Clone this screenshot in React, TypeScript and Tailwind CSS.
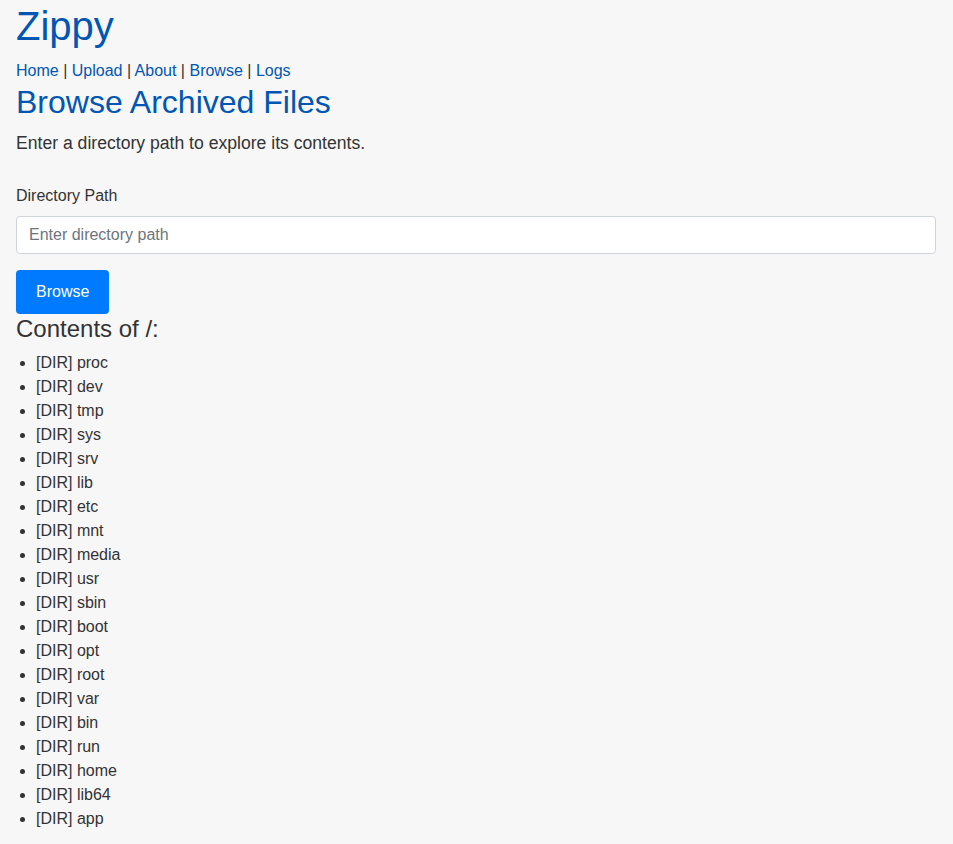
const entries = [
  "proc",
  "dev",
  "tmp",
  "sys",
  "srv",
  "lib",
  "etc",
  "mnt",
  "media",
  "usr",
  "sbin",
  "boot",
  "opt",
  "root",
  "var",
  "bin",
  "run",
  "home",
  "lib64",
  "app",
];

const navLinks = ["Home", "Upload", "About", "Browse", "Logs"];

export default function App() {
  return (
    <div className="min-h-[844px] bg-[#f7f7f7] pl-4 pr-[17px] pt-[2px] pb-4 font-['Liberation_Sans',Arial,sans-serif] text-base leading-6 text-[#333]">
      <h1 className="text-[40px] leading-[48px] text-[#0056b3]">Zippy</h1>

      <nav className="mt-[9px] text-[#333]">
        {navLinks.map((link, i) => (
          <span key={link}>
            {i > 0 && " | "}
            <a href="#" className="text-[#0056b3]">
              {link}
            </a>
          </span>
        ))}
      </nav>

      <h2 className="text-[32px] leading-[38px] text-[#0056b3]">
        Browse Archived Files
      </h2>

      <p className="mt-[9px] text-[17.6px] leading-[26px]">
        Enter a directory path to explore its contents.
      </p>

      <form className="mt-[28px]" onSubmit={(e) => e.preventDefault()}>
        <label htmlFor="path" className="block">
          Directory Path
        </label>
        <input
          id="path"
          type="text"
          placeholder="Enter directory path"
          className="mt-2 block h-[38px] w-full rounded border border-[#ced4da] bg-white px-3 text-base text-[#495057] placeholder:text-[#6c757d] outline-none"
        />
        <button
          type="submit"
          className="mt-4 h-[44px] rounded bg-[#007bff] px-5 text-white"
        >
          Browse
        </button>
      </form>

      <h3 className="text-2xl leading-[29px]">Contents of /:</h3>

      <ul className="mt-2 list-disc pl-5">
        {entries.map((name) => (
          <li key={name}>[DIR] {name}</li>
        ))}
      </ul>
    </div>
  );
}
